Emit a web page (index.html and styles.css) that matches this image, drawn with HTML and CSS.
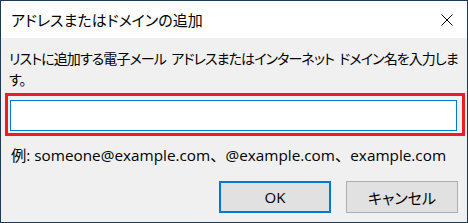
FILE: index.html
```html
<!DOCTYPE html>
<html>
<head>
    <title>アドレスまたはドメインの追加</title>
    <meta charset="utf-8">
    <link rel="stylesheet" href="styles.css">
</head>
<body>
    <div class="window">
        <div class="titlebar">
            <span class="title">アドレスまたはドメインの追加</span>
            <span class="close">
                <svg width="12" height="12" viewBox="0 0 12 12">
                    <path d="M0.5 0.5 L11.5 11.5 M11.5 0.5 L0.5 11.5" stroke="#000" stroke-width="1" fill="none"/>
                </svg>
            </span>
        </div>
        <div class="content">
            <p class="prompt">リストに追加する電子メール アドレスまたはインターネット ドメイン名を入力します。</p>
            <div class="highlight">
                <input type="text" class="address">
            </div>
            <p class="example">例: someone@example.com、@example.com、example.com</p>
            <div class="buttons">
                <button class="default">OK</button>
                <button>キャンセル</button>
            </div>
        </div>
    </div>
</body>
</html>
```

FILE: styles.css
```css
body {
    margin: 0;
    font-family: "Open Sans", "Noto Sans CJK JP", sans-serif;
    color: #000;
}

.window {
    width: 468px;
    height: 223px;
    box-sizing: border-box;
    border: 1px solid #1c3a56;
    background-color: #f0f0f0;
    display: flex;
    flex-direction: column;
}

.titlebar {
    height: 37px;
    background-color: #fff;
    display: flex;
    align-items: center;
    padding: 0 14px 0 10px;
}

.title {
    flex: 1;
    font-family: "Noto Sans CJK JP", sans-serif;
    font-feature-settings: "palt";
    font-size: 15px;
}

.close {
    display: flex;
}

.content {
    padding: 10px 0 0 0;
}

.prompt {
    margin: 0 0 3px 8px;
    width: 452px;
    font-family: "Noto Sans CJK JP", sans-serif;
    font-feature-settings: "palt";
    font-size: 14px;
    letter-spacing: -0.9px;
    word-spacing: 3px;
    line-height: 21px;
}

.highlight {
    margin-left: 4px;
    width: 460px;
    box-sizing: border-box;
    border: 3px solid #ed1c24;
    padding: 4px 5px 2px 2px;
}

.address {
    display: block;
    width: 100%;
    height: 31px;
    box-sizing: border-box;
    border: 1px solid #0078d7;
    background: #fff;
    outline: none;
}

.example {
    margin: 9px 0 0 10px;
    font-size: 15.3px;
    line-height: 21px;
}

.buttons {
    display: flex;
    justify-content: flex-end;
    gap: 15px;
    margin-top: 15px;
    padding-right: 9px;
}

button {
    width: 112px;
    height: 32px;
    box-sizing: border-box;
    background-color: #e1e1e1;
    border: 1px solid #adadad;
    font-family: "Open Sans", "Noto Sans CJK JP", sans-serif;
    font-feature-settings: "palt";
    font-size: 15px;
    color: #000;
    padding: 0;
}

button.default {
    border: 2px solid #0078d7;
}
```
